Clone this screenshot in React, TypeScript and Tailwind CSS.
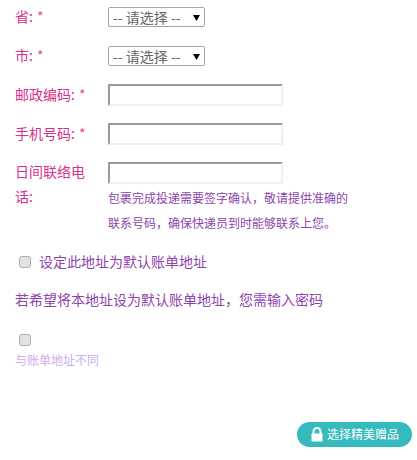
import React from 'react';

const FONT = "font-['Noto_Sans_CJK_SC',sans-serif]";

function Label({ text, required }: { text: React.ReactNode; required?: boolean }) {
  return (
    <label className="h-[20px] w-[93px] shrink-0 text-[14px] leading-[18px] text-[#d6308e]">
      {text}
      {required && <span className="ml-[4px] text-[#f0506e]">*</span>}
    </label>
  );
}

function SelectField() {
  return (
    <div className="relative h-[20px] w-[97px]">
      <select className="block h-[20px] w-[97px] appearance-none rounded-[2px] border border-[#a6a6a6] bg-white pl-[4px] text-[14px] leading-[18px] text-[#666666]">
        <option>-- 请选择 --</option>
      </select>
      <svg className="pointer-events-none absolute left-[85px] top-[8px]" width="7" height="6" viewBox="0 0 7 6">
        <path d="M0 0h7L3.5 6z" fill="#000" />
      </svg>
    </div>
  );
}

function TextField() {
  return (
    <input
      type="text"
      className="block h-[22px] w-[175px] border-2 border-b-[#efefef] border-l-[#9a9a9a] border-r-[#efefef] border-t-[#9a9a9a] bg-white"
    />
  );
}

function Check() {
  return (
    <input
      type="checkbox"
      className="m-0 block h-[12px] w-[12px] appearance-none rounded-[3px] border border-[#adadad] bg-[#e2e2e2]"
    />
  );
}

export default function App() {
  return (
    <div className={`relative h-[460px] w-[417px] overflow-hidden bg-white pl-[15px] pt-[7px] ${FONT}`}>
      <div className="mb-[19px] flex h-[20px] items-center">
        <Label text="省:" required />
        <SelectField />
      </div>
      <div className="mb-[18px] flex h-[20px] items-center">
        <Label text="市:" required />
        <SelectField />
      </div>
      <div className="mb-[17px] flex h-[22px] items-center">
        <Label text="邮政编码:" required />
        <TextField />
      </div>
      <div className="mb-[17px] flex h-[22px] items-center">
        <Label text="手机号码:" required />
        <TextField />
      </div>

      <div className="flex">
        <div className="-mt-[3px] mr-[13px] w-[80px] shrink-0 text-[14px] leading-[25px] text-[#d6308e]">日间联络电话:</div>
        <div>
          <TextField />
          <p className="mt-[1px] w-[245px] text-[12px] leading-[25px] text-[#8e44ad]">
            包裹完成投递需要签字确认，敬请提供准确的联系号码，确保快递员到时能够联系上您。
          </p>
        </div>
      </div>

      {/* default billing address */}
      <div className="mt-[17px] flex h-[20px] items-center pl-[4px]">
        <Check />
        <span className="ml-[8px] h-[20px] text-[14px] leading-[18px] text-[#8e44ad]">设定此地址为默认账单地址</span>
      </div>

      <p className="mt-[18px] h-[20px] text-[14px] leading-[18px] text-[#8e44ad]">若希望将本地址设为默认账单地址，您需输入密码</p>

      <div className="mt-[24px] pl-[4px]">
        <Check />
      </div>
      <p className="mt-[5px] text-[12px] leading-[18px] text-[#d0aaf0]">与账单地址不同</p>

      {/* floating gift button */}
      <button className="absolute left-[297px] top-[422px] flex h-[25px] w-[115px] items-center rounded-full bg-[#35bbbd] pl-[14px] text-[12px] text-white">
        <svg className="mr-[4px] shrink-0" width="12" height="15" viewBox="0 0 12 15">
          <path d="M2.5 7V4.5a3.5 3.5 0 0 1 7 0V7" fill="none" stroke="#fff" strokeWidth="2" />
          <rect x="0.5" y="6.5" width="11" height="8" fill="#fff" />
        </svg>
        <span className="-mt-[1px]">选择精美赠品</span>
      </button>
    </div>
  );
}
